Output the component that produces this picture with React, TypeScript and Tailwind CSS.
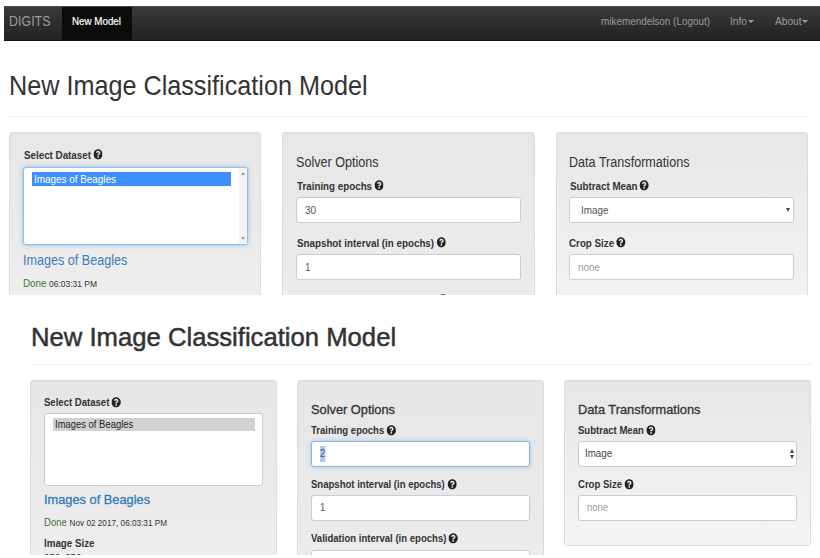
import { FaQuestionCircle } from "react-icons/fa";
import type { ReactNode } from "react";

type Variant = "classic" | "modern";

function Label({ variant, children, className = "" }: { variant: Variant; children: ReactNode; className?: string }) {
  const look = variant === "classic" ? "text-[11px] scale-x-[0.89]" : "text-[10.5px] scale-x-[0.91]";
  return (
    <div className={`flex h-4 w-max origin-left items-center gap-[2.5px] whitespace-nowrap font-bold text-[#333] ${look} ${className}`}>
      <span>{children}</span>
      <FaQuestionCircle className="-mt-px size-[10.5px] text-[#222]" />
    </div>
  );
}

function Heading({ variant, children }: { variant: Variant; children: ReactNode }) {
  const look =
    variant === "classic"
      ? "text-[14px] scale-x-[0.9]"
      : "text-[13px] scale-x-[0.985] [-webkit-text-stroke:0.3px_#333]";
  return <h3 className={`flex h-[18px] w-max origin-left items-center whitespace-nowrap text-[#333] ${look}`}>{children}</h3>;
}

function Field({ variant, children, className = "" }: { variant: Variant; children?: ReactNode; className?: string }) {
  const look = variant === "classic" ? "text-[11px]" : "text-[10.5px]";
  return (
    <div className={`flex h-[26px] items-center rounded-[3px] border bg-white ${look} ${className}`}>{children}</div>
  );
}

function Value({ children, className = "" }: { children: ReactNode; className?: string }) {
  return <span className={`origin-left scale-x-[0.9] ${className}`}>{children}</span>;
}

function Caret() {
  return <span className="mt-[7px] border-x-[3px] border-t-[3px] border-x-transparent border-t-[#9d9d9d]" />;
}

function Well({ children, className = "" }: { children: ReactNode; className?: string }) {
  return (
    <section className={`shrink-0 rounded-[3px] border border-[#dcdcdc] shadow-[inset_0_1px_1px_rgba(0,0,0,0.03)] ${className}`}>
      {children}
    </section>
  );
}

function ClassicPanel() {
  return (
    <div className="h-[295px] overflow-hidden pt-[6px]">
      <nav className="ml-1 flex h-[35px] items-stretch border-y border-t-[#4a4a4a] border-b-[#111] bg-linear-to-b from-[#3a3a3a] to-[#222] text-[11px] text-[#9d9d9d]">
        <div className="w-[58px] pl-[5px] pt-[4px] text-[14px] leading-[20px]">
          <span className="inline-block origin-left scale-x-[0.89]">DIGITS</span>
        </div>
        <div className="w-[70px] bg-[#0b0b0b] pl-[10px] pt-[6px] leading-4 text-white">
          <span className="inline-block origin-left scale-x-[0.89] whitespace-nowrap [-webkit-text-stroke:0.2px_white]">New Model</span>
        </div>
        <div className="ml-auto flex pt-[6px] leading-4">
          <div className="w-[129px]">
            <span className="inline-block origin-left scale-x-[0.9] whitespace-nowrap">mikemendelson (Logout)</span>
          </div>
          <div className="flex w-[44.5px] items-start">
            <span className="w-[18px] origin-left scale-x-[0.92]">Info</span>
            <Caret />
          </div>
          <div className="flex w-[45.5px] items-start">
            <span className="w-[27px] origin-left scale-x-[0.92]">About</span>
            <Caret />
          </div>
        </div>
      </nav>
      <header className="ml-[9px] mr-3 flex h-[76px] items-start border-b border-[#eee] pt-[28px]">
        <h1 className="w-max origin-left scale-x-[0.9] whitespace-nowrap text-[28px] leading-[34px] text-[#333]">
          New Image Classification Model
        </h1>
      </header>
      <div className="ml-[9px] mt-[15px] flex gap-[21px]">
        <Well className="h-[300px] w-[252px] bg-linear-to-b from-[#e7e7e7] to-[#f3f3f3] px-[13px] pt-[14px]">
          <Label variant="classic" className="ml-[1px]">Select Dataset</Label>
          <div className="mt-[4px] flex h-[78px] w-[225px] rounded-[3px] border border-[#8fc0ec] bg-white shadow-[0_0_4px_rgba(102,175,233,0.7)]">
            <div className="ml-2 mt-1 flex h-[14px] w-[199px] items-center bg-[#3e8fff] pl-[1.5px] text-[11px] text-white">
              <Value className="whitespace-nowrap">Images of Beagles</Value>
            </div>
            <div className="ml-auto flex w-2 flex-col items-center justify-between bg-[#f3f3f3] py-1">
              <span className="border-x-2 border-b-[3px] border-x-transparent border-b-[#999]" />
              <span className="border-x-2 border-t-[3px] border-x-transparent border-t-[#999]" />
            </div>
          </div>
          <div className="mt-[5px] flex h-5 w-max origin-left scale-x-[0.9] items-center whitespace-nowrap text-[14px] text-[#3f7cba]">
            Images of Beagles
          </div>
          <div className="mt-[5px] flex h-4 w-max origin-left scale-x-[0.89] items-baseline gap-[3px] whitespace-nowrap text-[11px] leading-4">
            <span className="text-[#3c763d]">Done</span>
            <span className="text-[9.5px] text-[#333]">06:03:31 PM</span>
          </div>
        </Well>
        <Well className="h-[400px] w-[252.5px] bg-linear-to-b from-[#e7e7e7] to-[#f3f3f3] px-[13px] pt-[20px]">
          <Heading variant="classic">Solver Options</Heading>
          <Label variant="classic" className="ml-[0.5px] mt-[7px]">Training epochs</Label>
          <Field variant="classic" className="mt-[3px] border-[#ccc] pl-2 text-[#555]"><Value>30</Value></Field>
          <Label variant="classic" className="ml-[0.5px] mt-[12px]">Snapshot interval (in epochs)</Label>
          <Field variant="classic" className="mt-[3px] border-[#ccc] pl-2 text-[#555]"><Value>1</Value></Field>
          <FaQuestionCircle className="ml-[142px] mt-[13.5px] size-[10px] text-[#222]" />
        </Well>
        <Well className="h-[200px] w-[252px] bg-linear-to-b from-[#e7e7e7] to-[#f5f5f5] pl-[12.5px] pr-[13px] pt-[20px]">
          <Heading variant="classic">Data Transformations</Heading>
          <Label variant="classic" className="ml-[0.5px] mt-[7px]">Subtract Mean</Label>
          <Field variant="classic" className="mt-[3px] justify-between border-[#ccc] pl-[11px] pr-[3px] text-[#555]">
            <Value>Image</Value>
            <span className="border-x-[2px] border-t-[4px] border-x-transparent border-t-[#444]" />
          </Field>
          <Label variant="classic" className="mt-[12px]">Crop Size</Label>
          <Field variant="classic" className="mt-[3px] border-[#ccc] pl-2 text-[#999]"><Value>none</Value></Field>
        </Well>
      </div>
    </div>
  );
}

function ModernPanel() {
  return (
    <div className="h-[260px] overflow-hidden">
      <header className="ml-[31px] mr-[9px] flex h-[70px] items-start border-b border-[#eee] pt-[26px]">
        <h1 className="w-max origin-left scale-x-[0.987] whitespace-nowrap text-[26px] leading-[32px] text-[#333] [-webkit-text-stroke:0.5px_#333]">
          New Image Classification Model
        </h1>
      </header>
      <div className="ml-[30px] mt-[15px] flex items-start gap-[20px]">
        <Well className="h-[300px] w-[247px] bg-linear-to-b from-[#e6e6e6] to-[#f3f3f3] px-[13px] pt-[14px]">
          <Label variant="modern">Select Dataset</Label>
          <div className="mt-[2px] h-[73px] rounded-[3px] border border-[#ccc] bg-white">
            <div className="ml-2 mt-1 flex h-[13px] w-[202px] items-center bg-[#d2d2d2] pl-[1.5px] text-[10.5px] text-[#222]">
              <Value className="whitespace-nowrap">Images of Beagles</Value>
            </div>
          </div>
          <div className="mt-[4px] flex h-5 w-max origin-left scale-x-[0.985] items-center whitespace-nowrap text-[13px] text-[#337ab7] [-webkit-text-stroke:0.3px_#337ab7]">
            Images of Beagles
          </div>
          <div className="mt-[4px] flex h-4 w-max origin-left scale-x-[0.91] items-baseline gap-[3px] whitespace-nowrap text-[10.5px] leading-4">
            <span className="text-[#3c763d]">Done</span>
            <span className="text-[9px] text-[#333]">Nov 02 2017, 06:03:31 PM</span>
          </div>
          <div className="mt-[6px] w-max origin-left scale-x-[0.93] text-[10.5px] font-bold leading-[14px] text-[#333]">Image Size</div>
          <div className="w-max origin-left scale-x-[0.93] text-[10.5px] leading-[16px] text-[#333]">256x256</div>
        </Well>
        <Well className="h-[400px] w-[247px] bg-linear-to-b from-[#e6e6e6] to-[#f3f3f3] px-[13px] pt-[20px]">
          <Heading variant="modern">Solver Options</Heading>
          <Label variant="modern" className="mt-[4px]">Training epochs</Label>
          <Field variant="modern" className="mt-[2px] border-[#7fb8ea] pl-2 text-[#555] shadow-[0_0_4px_rgba(102,175,233,0.6)]">
            <Value className="bg-[#a9cdfa]">2</Value>
          </Field>
          <Label variant="modern" className="mt-[10px]">Snapshot interval (in epochs)</Label>
          <Field variant="modern" className="mt-[2px] border-[#ccc] pl-2 text-[#555]"><Value>1</Value></Field>
          <Label variant="modern" className="mt-[10px]">Validation interval (in epochs)</Label>
          <Field variant="modern" className="mt-[3px] border-[#ccc]" />
        </Well>
        <Well className="h-[166px] w-[247px] bg-linear-to-b from-[#e6e6e6] to-[#f5f5f5] px-[13px] pt-[20px]">
          <Heading variant="modern">Data Transformations</Heading>
          <Label variant="modern" className="mt-[4px]">Subtract Mean</Label>
          <Field variant="modern" className="mt-[2px] justify-between border-[#ccc] pl-[5.5px] pr-[2px] text-[#444]">
            <Value className="scale-x-[0.93]">Image</Value>
            <span className="flex flex-col gap-[2px]">
              <span className="border-x-[2.5px] border-b-[4px] border-x-transparent border-b-[#444]" />
              <span className="border-x-[2.5px] border-t-[4px] border-x-transparent border-t-[#444]" />
            </span>
          </Field>
          <Label variant="modern" className="mt-[10px]">Crop Size</Label>
          <Field variant="modern" className="mt-[2px] border-[#ccc] pl-2 text-[#999]"><Value>none</Value></Field>
        </Well>
      </div>
    </div>
  );
}

export default function App() {
  return (
    <main className="h-[558px] w-[820px] overflow-hidden bg-white font-['Liberation_Sans',Arial,sans-serif]">
      <ClassicPanel />
      <ModernPanel />
    </main>
  );
}
